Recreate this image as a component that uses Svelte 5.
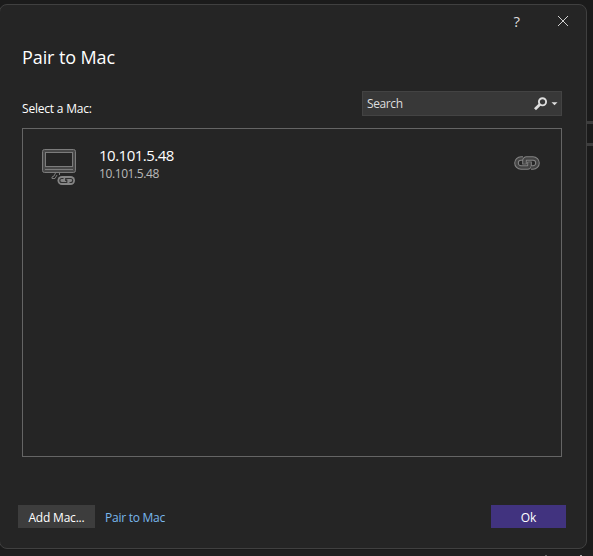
<script>
  const macs = [{ name: '10.101.5.48', address: '10.101.5.48' }];
</script>

{#snippet link()}
  <g fill="none" stroke-linejoin="round">
    <path d="M9 3.5H7a4.5 4.5 0 0 0 0 9h6.5a2 2 0 0 0 2-2V6.5" stroke="#858585" stroke-width="4.6" />
    <path d="M9 3.5H7a4.5 4.5 0 0 0 0 9h6.5a2 2 0 0 0 2-2V7.3" stroke="#444" stroke-width="2.6" />
    <path d="M17 12.5h2a4.5 4.5 0 0 0 0-9h-6.5a2 2 0 0 0-2 2V9.5" stroke="#858585" stroke-width="4.6" />
    <path d="M17 12.5h2a4.5 4.5 0 0 0 0-9h-6.5a2 2 0 0 0-2 2V8.7" stroke="#444" stroke-width="2.6" />
  </g>
{/snippet}

<div class="desktop">
  <div class="behind"></div>
  <div class="traces"><i></i><b></b></div>
  <main class="dialog">
    <header>
      <span class="help">?</span>
      <svg class="close" width="12" height="12" viewBox="0 0 12 12"><path d="M1 1l10 10M11 1L1 11" stroke="#d0d0d0" fill="none" /></svg>
    </header>
    <h1><span>Pair to Mac</span></h1>
    <div class="tools">
      <span class="label">Select a Mac:</span>
      <div class="search">
        <span>Search</span>
        <svg width="26" height="16" viewBox="0 0 26 16">
          <circle cx="9.5" cy="5.8" r="3.6" fill="none" stroke="#dedede" stroke-width="1.9" />
          <path d="M6.8 8.5L2 13.2" stroke="#dedede" stroke-width="2.8" />
          <path d="M18.5 6.3h6l-3 3z" fill="#dedede" />
        </svg>
      </div>
    </div>
    <section class="list">
      {#each macs as mac}
        <div class="row">
          <svg class="computer" width="36" height="38" viewBox="0 0 36 38">
            <rect x="1.5" y="1.5" width="33" height="23" rx="2" fill="#484848" stroke="#7c7c7c" />
            <rect x="4.5" y="4.5" width="27" height="14" fill="#252525" stroke="#7c7c7c" />
            <path d="M4 21.5h28" stroke="#7c7c7c" />
            <path d="M14.5 25l-1.5 3-2 1v1.5h3l2-3.5M18.5 25v2" fill="none" stroke="#7c7c7c" />
            <rect x="16.5" y="28" width="17.5" height="9" rx="4.5" fill="#858585" />
            <path d="M22.5 30.5h-1.7a2 2 0 0 0 0 4h5v-3M28.5 34.5h1.2a2 2 0 0 0 0-4h-5v2.6" fill="none" stroke="#303030" stroke-width="1.1" />
          </svg>
          <div class="names">
            <strong>{mac.name}</strong>
            <span>{mac.address}</span>
          </div>
          <svg class="link" width="26" height="16" viewBox="0 0 26 16">{@render link()}</svg>
        </div>
      {/each}
    </section>
    <footer>
      <button class="add"><span>Add Mac...</span></button>
      <a href="#pair">Pair to Mac</a>
      <button class="ok"><span>Ok</span></button>
    </footer>
  </main>
</div>

<style>
  :global(body) { margin: 0; background: #1b1b1b; }
  * { box-sizing: border-box; }
  .desktop { position: relative; width: 593px; height: 556px; padding-top: 4px; overflow: hidden; background: #1b1b1b; font: 12px/16px "Open Sans", "Noto Sans", sans-serif; color: #fff; }
  .behind { position: absolute; left: 0; right: 0; bottom: 0; height: 6px; background: #202020; }
  .traces { position: absolute; right: 0; top: 121px; width: 7px; height: 25px; border-top: 3px solid #3d3d3d; border-bottom: 3px solid #3d3d3d; }
  .traces i, .traces b { position: absolute; top: 431px; right: 11px; width: 2px; height: 1px; background: #aaa; }
  .traces b { right: 46px; background: #666; }
  .dialog { position: relative; width: 588px; height: 545px; margin-left: -1px; padding: 0 24px 0 22px; border: 1px solid #404040; border-radius: 8px; background: #252525; display: flex; flex-direction: column; }
  header { display: flex; height: 32px; justify-content: flex-end; align-items: center; margin-right: -7px; }
  .help { font-size: 15px; margin-right: 37px; color: #dedede; }
  h1 { margin: 8px 0 0; font-size: 18px; font-weight: 400; line-height: 24px; letter-spacing: -.1px; }
  .tools { display: flex; justify-content: space-between; height: 25px; margin-top: 22px; }
  .label { padding-top: 10px; letter-spacing: -.2px; white-space: nowrap; }
  .search { display: flex; align-items: center; justify-content: space-between; width: 200px; height: 25px; padding: 0 2px 0 4px; border: 1px solid #434343; background: #383838; color: #dedede; letter-spacing: -.4px; }
  .list { height: 329px; margin-top: 12px; border: 1px solid #656565; padding: 19px 21px 0 18px; }
  .row { display: flex; align-items: flex-start; }
  .names { display: flex; flex-direction: column; margin-left: 22px; flex: 1; }
  .names strong { font-size: 15px; line-height: 15px; font-weight: 400; letter-spacing: -.5px; }
  .names span { color: #b9b9b9; line-height: 16px; margin-top: 3px; letter-spacing: -.4px; }
  .link { margin-top: 7px; }
  footer { display: flex; align-items: center; height: 23px; margin: 48px -4px 0; }
  button { height: 23px; padding: 2px 0 0; border: 0; font: inherit; color: #fff; line-height: 20px; }
  .add { width: 77px; background: #3d3d3d; letter-spacing: -.2px; }
  a { margin: 2px 0 0 10px; color: #79b8ed; text-decoration: none; letter-spacing: -.25px; }
  .ok { width: 75px; margin-left: auto; background: #41337f; }
</style>
